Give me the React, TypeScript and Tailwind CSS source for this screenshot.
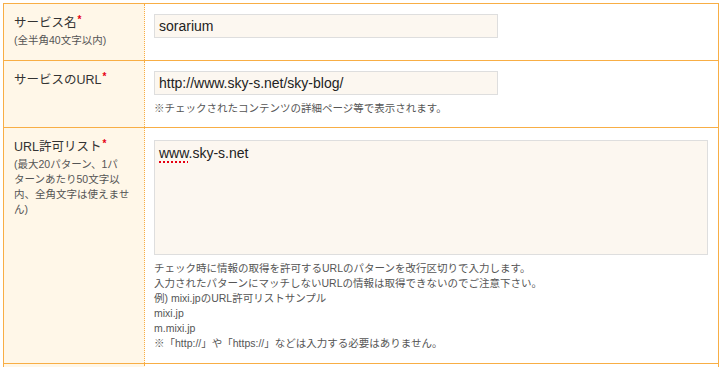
const jp = "font-['Liberation_Sans','Noto_Sans_CJK_JP',sans-serif]";

function Req() {
  return <span className="relative -top-[4px] ml-px text-[10px] font-bold text-[#e60012]">*</span>;
}

function Row({ label, sub, children, last, pb }: { label: string; sub?: React.ReactNode; children?: React.ReactNode; last?: boolean; pb: string }) {
  return (
    <div className={`flex border-t border-[#f8ae45] ${last ? "border-b" : ""}`}>
      <div className="w-[141px] shrink-0 border-r border-dotted border-[#f8ae45] bg-[#fff7e8] px-[10px] pt-[10px] pb-[12px]">
        <div className="text-[12.5px] leading-[18px] text-[#333]">
          {label}
          <Req />
        </div>
        {sub ? <div className="text-[10.5px] leading-[15px] text-[#555]">{sub}</div> : null}
      </div>
      <div className={`flex-1 pl-[9px] pr-[9px] pt-[10px] ${pb}`}>{children}</div>
    </div>
  );
}

function Note({ children }: { children: React.ReactNode }) {
  return <div className="text-[10.5px] leading-[15px] text-[#555]">{children}</div>;
}

export default function App() {
  return (
    <div className={`h-[367px] w-[723px] overflow-hidden bg-white pt-[3px] pl-[3px] ${jp}`}>
      <div className="w-[716px] border-x border-[#f8ae45]">
        <Row label="サービス名" sub="(全半角40文字以内)" pb="pb-[10px]">
          <div className="h-[24px] w-[344px] border border-[#dedede] bg-[#fcf7f0] px-[4px] text-[14px] leading-[22px] text-[#222]">
            sorarium
          </div>
        </Row>
        <Row label="サービスのURL" pb="pb-[11px]">
          <div className="h-[24px] w-[344px] border border-[#dedede] bg-[#fcf7f0] px-[4px] text-[14px] leading-[22px] text-[#222]">
            http://www.sky-s.net/sky-blog/
          </div>
          <div className="mt-[6px]">
            <Note>※チェックされたコンテンツの詳細ページ等で表示されます。</Note>
          </div>
        </Row>
        <Row
          last
          pb="pb-[12px]"
          label="URL許可リスト"
          sub={
            <>
              (最大20パターン、1パ
              <br />
              ターンあたり50文字以
              <br />
              内、全角文字は使えませ
              <br />
              ん)
            </>
          }
        >
          <div className="mt-[2px] h-[115px] w-[554px] border border-[#dedede] bg-[#fcf7f0] px-[4px] pt-[3px] text-[14px] leading-[18px] text-[#222]">
            <span className="underline decoration-[#e60012] decoration-dotted decoration-2 underline-offset-[3px]">www</span>.sky-s.net
          </div>
          <div className="mt-[6px]">
            <Note>チェック時に情報の取得を許可するURLのパターンを改行区切りで入力します。</Note>
            <Note>入力されたパターンにマッチしないURLの情報は取得できないのでご注意下さい。</Note>
            <Note>例) mixi.jpのURL許可リストサンプル</Note>
            <Note>mixi.jp</Note>
            <Note>m.mixi.jp</Note>
            <Note>※「http://」や「https://」などは入力する必要はありません。</Note>
          </div>
        </Row>
        <div className="flex h-[20px]">
          <div className="w-[141px] shrink-0 border-r border-dotted border-[#f8ae45] bg-[#fff7e8]" />
          <div className="flex-1" />
        </div>
      </div>
    </div>
  );
}
